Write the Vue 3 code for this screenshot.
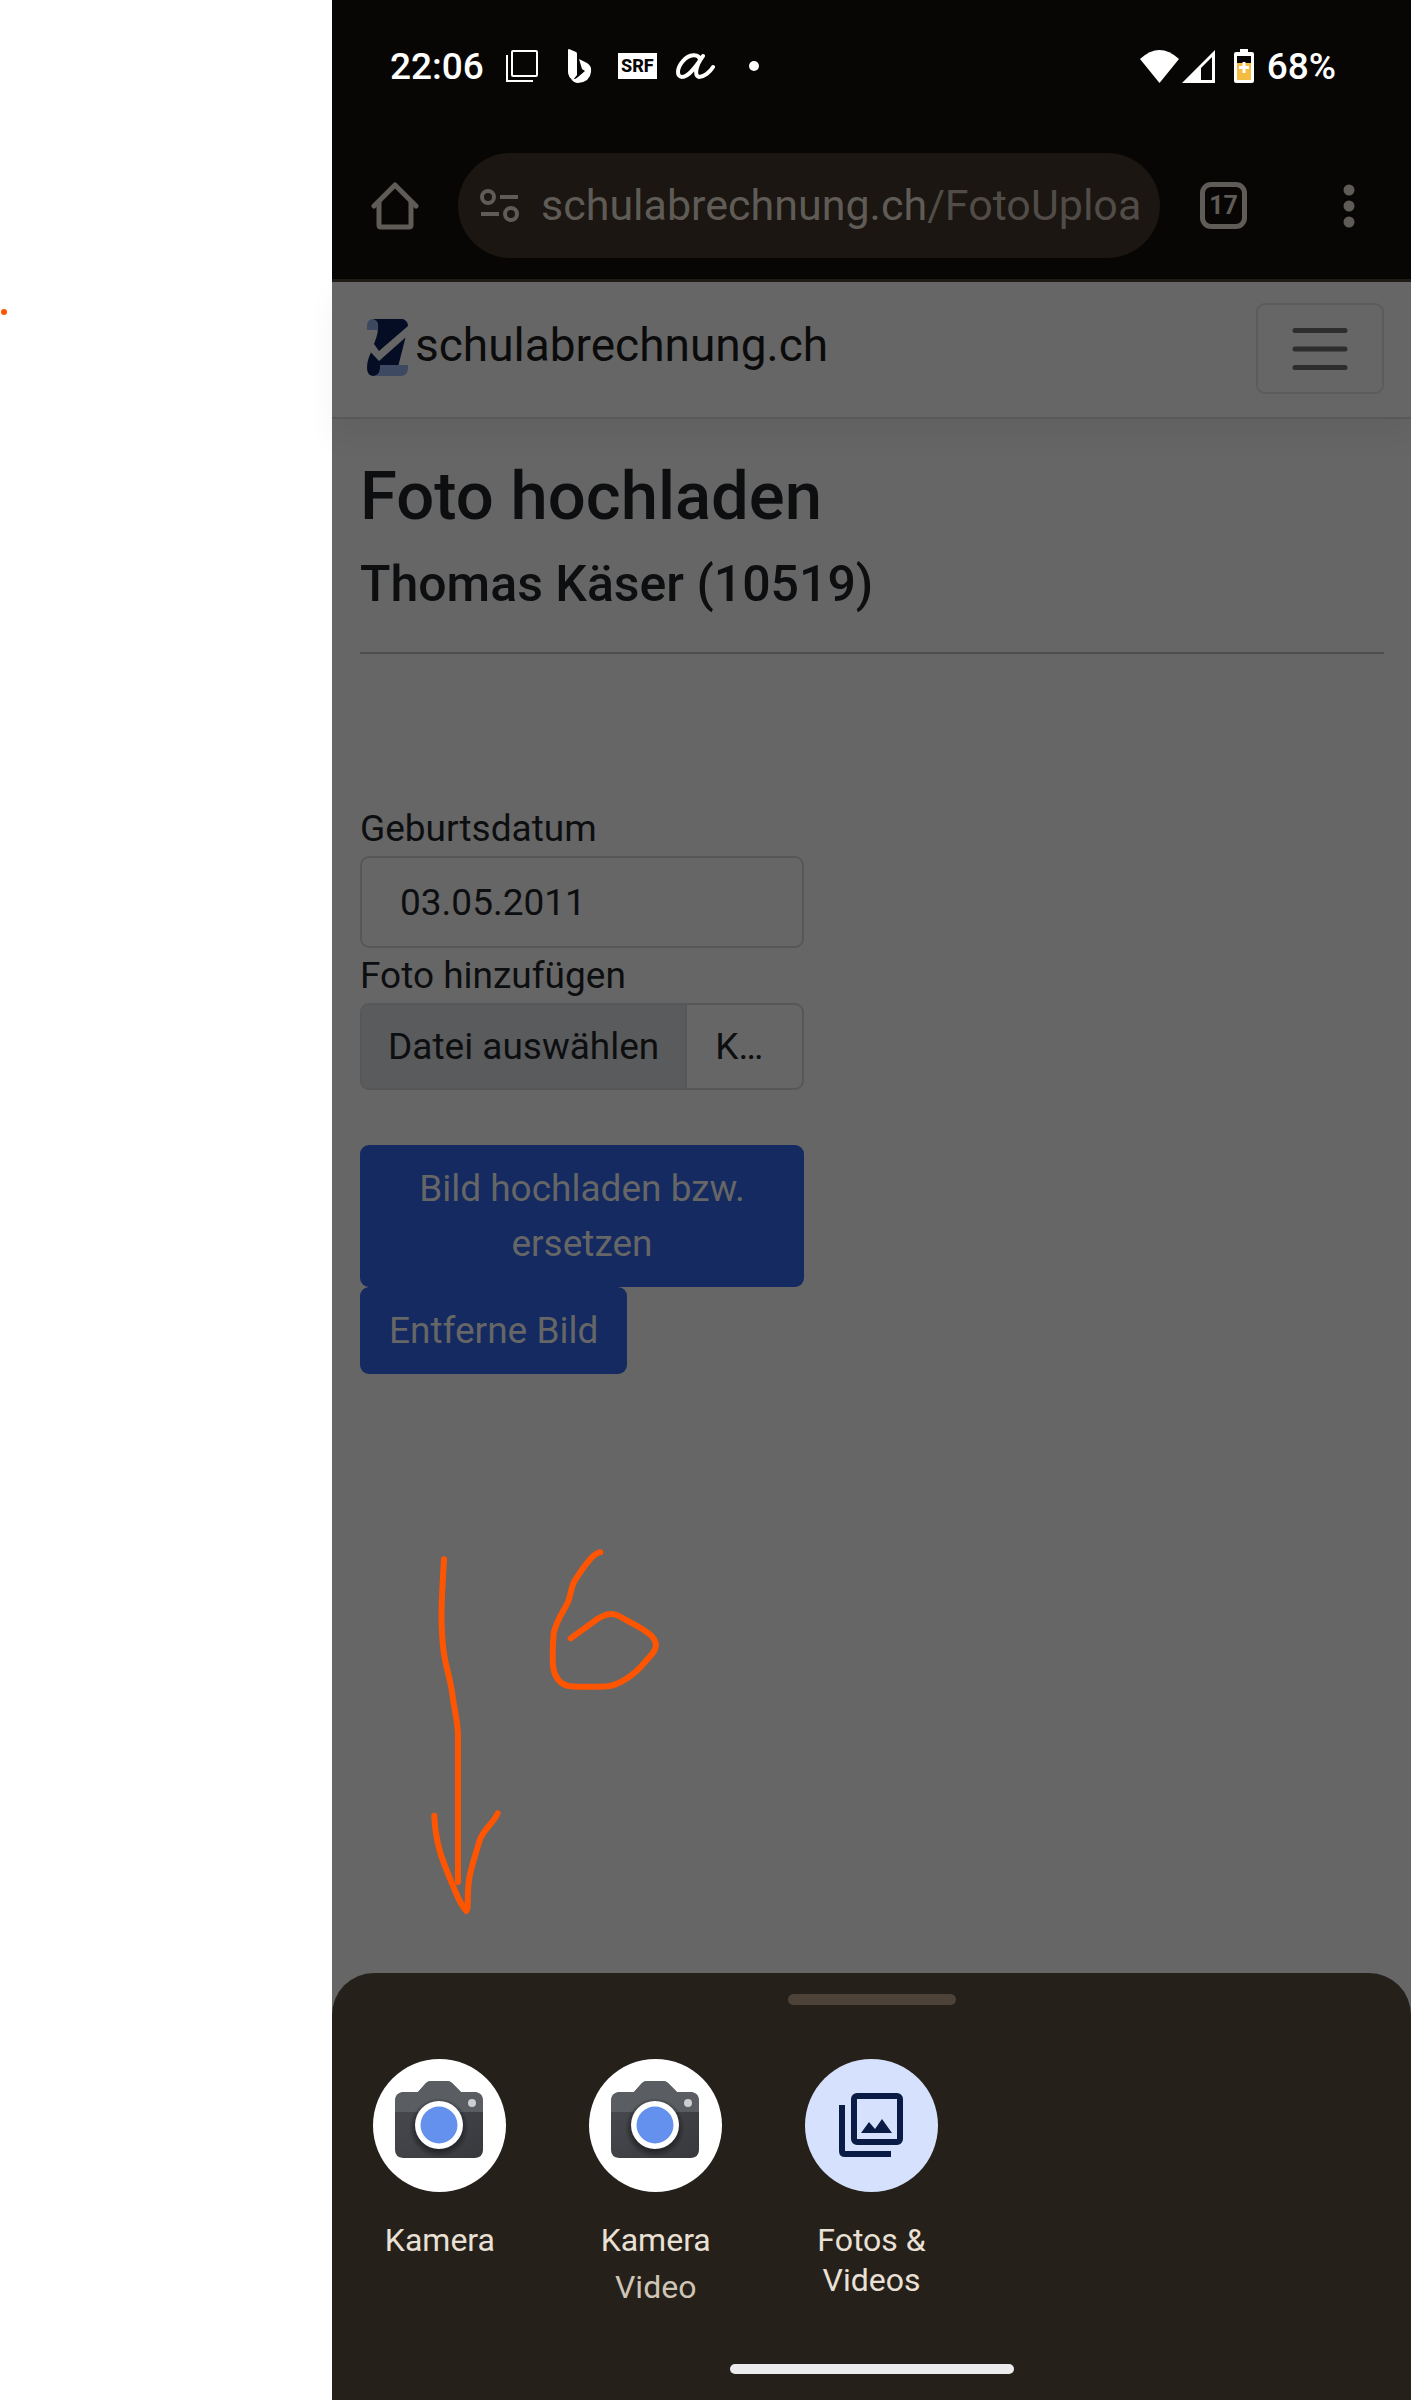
<script setup>
import { ref } from 'vue'

const birthDate = ref('03.05.2011')

const targets = [
  { id: 'photo', icon: 'camera', label: 'Kamera', sub: '' },
  { id: 'video', icon: 'camera', label: 'Kamera', sub: 'Video' },
  { id: 'gallery', icon: 'gallery', label: 'Fotos & Videos', sub: '' }
]
</script>

<template>
  <div class="page">
    <aside class="margin">
      <svg class="ink-dot" viewBox="0 0 8 8" aria-hidden="true"><circle cx="4" cy="4" r="3" fill="#ff5500" /></svg>
    </aside>

    <div class="phone">
      <header class="system">
        <div class="status">
          <span class="clock">22:06</span>
          <svg class="s-copy" viewBox="0 0 32 32" fill="none" stroke="#fff" stroke-width="2">
            <rect x="6" y="1" width="25" height="25" rx="1" />
            <path d="M1 5V31H27" />
          </svg>
          <svg class="s-bing" viewBox="0 0 24 34" fill="#fff">
            <path d="M1 0L8 3Q9 3.500 9 5V26L5 31Q0 28 0 23V1Q0 0 1 0Z" />
            <path d="M11 10L19 14Q24 17 23 23Q22 33 10 34Q6 34 3 30Q7 31 10 28L17 22L14 20Z" />
          </svg>
          <span class="s-srf">SRF</span>
          <svg class="s-script" viewBox="0 0 39 26" fill="none" stroke="#fff" stroke-width="4" stroke-linecap="round" stroke-linejoin="round">
            <path d="M24 7C23 0 13 1 7 8C0 16 1 24 6 24C13 24 21 12 27 3C20 12 18 23 23 24C28 24 34 19 37 14" />
          </svg>
          <i class="s-dot"></i>
          <span class="grow"></span>
          <svg class="s-wifi" viewBox="0 0 39 33" fill="#fff"><path d="M0 9Q19.500 -9 39 9L19.500 33Z" /></svg>
          <svg class="s-signal" viewBox="0 0 33 33">
            <path d="M0 33L33 0V33Z" fill="#fff" /><path d="M19 18L30 7V30H19Z" fill="#080604" />
          </svg>
          <svg class="s-battery" viewBox="0 0 20 34">
            <path d="M6 0H14V3H18Q20 3 20 5V32Q20 34 18 34H2Q0 34 0 32V5Q0 3 2 3H6Z" fill="#fff" />
            <path d="M3 7H17V14H3Z" fill="#080604" /><path d="M3 14H17V31H3Z" fill="#f4bd42" />
            <path d="M8.500 13H11.500V17H15V20H11.500V24H8.500V20H5V17H8.500Z" fill="#fff" />
          </svg>
          <span class="percent">68%</span>
        </div>

        <div class="toolbar">
          <button class="icon-btn home" type="button" aria-label="Startseite">
            <svg viewBox="0 0 48 48" fill="none" stroke="#5f5b56" stroke-width="5" stroke-linecap="round" stroke-linejoin="round">
              <path d="M3 24L24 3L45 24" /><path d="M8 20V43Q8 45 10 45H38Q40 45 40 43V20" />
            </svg>
          </button>
          <div class="omnibox">
            <svg class="tune" viewBox="0 0 39 34" fill="none" stroke="#5f5b56" stroke-width="4">
              <circle cx="8" cy="8" r="6" /><path d="M20 8H38M1 25H19" /><circle cx="31" cy="25" r="6" />
            </svg>
            <div class="url" role="textbox" aria-label="Adresse">schulabrechnung.ch<span>/FotoUploa</span></div>
          </div>
          <button class="tabs" type="button" aria-label="Tabs">17</button>
          <button class="icon-btn more" type="button" aria-label="Menü">
            <svg viewBox="0 0 12 44" fill="#5f5b56"><circle cx="6" cy="6" r="5.500" /><circle cx="6" cy="22" r="5.500" /><circle cx="6" cy="38" r="5.500" /></svg>
          </button>
        </div>
      </header>

      <nav class="navbar">
        <a class="brand" href="#">
          <svg class="logo" viewBox="0 1 42 69">
            <path d="M1 20V15Q2 9 7 9Q13 10 12 20Z" fill="#3c4960" />
            <path d="M7 9H37Q42 11 42 16L13 41L8 34Q13 22 12 14Q11 10 7 9Z" fill="#040d24" />
            <path d="M12 55H42V59Q41 66 35 66H7Z" fill="#3c4960" />
            <path d="M39.500 27.500L32.500 55H14Q15 65 7 66Q1 65 1 58Q1 50 5 42.500L13 51Z" fill="#040d24" />
          </svg>
          <span>schulabrechnung.ch</span>
        </a>
        <button class="toggler" type="button" aria-label="Navigation umschalten">
          <svg viewBox="0 0 56 42" stroke="#2d2d2d" stroke-width="5" stroke-linecap="round"><path d="M3 2.500H53M3 21H53M3 39.500H53" /></svg>
        </button>
      </nav>

      <main class="content">
        <h1>Foto hochladen</h1>
        <h2>Thomas Käser (10519)</h2>
        <hr />

        <form class="form" @submit.prevent>
          <label for="birth">Geburtsdatum</label>
          <input id="birth" v-model="birthDate" class="text-input" type="text" />
          <label for="photo">Foto hinzufügen</label>
          <div class="file">
            <span class="file-btn">Datei auswählen</span>
            <span class="file-name">K…</span>
            <input id="photo" type="file" accept="image/*" />
          </div>
          <button class="btn wide" type="submit">Bild hochladen bzw. ersetzen</button>
          <button class="btn" type="button">Entferne Bild</button>
        </form>

        <svg class="ink" viewBox="0 0 900 1260" fill="none" stroke="#ff5500" stroke-width="18" stroke-linecap="round" stroke-linejoin="round" aria-hidden="true">
          <path d="M132 118C125 235 120 310 131 395C137 440 148 465 156 515C163 575 174 600 174 650V1086" />
          <path d="M103 887C104 930 110 958 119 992C134 1042 160 1100 176 1137C184 1152 190 1163 199 1173C207 1167 200 1130 207 1080C212 1045 225 1010 239 961C248 930 280 910 293 880" />
          <path d="M601 97C580 97 545 150 524 182C512 203 514 220 504 246C490 275 468 302 461 340C458 380 457 420 460 445C464 470 480 497 513 499C540 502 590 500 622 499C660 495 708 460 734 427C750 408 768 395 768 375C766 350 740 335 715 320C690 307 675 298 657 288C637 276 612 284 592 297L512 355" />
        </svg>
      </main>

      <section class="sheet">
        <div class="handle"></div>
        <div class="targets">
          <button v-for="t in targets" :key="t.id" class="target" type="button">
            <svg v-if="t.icon === 'camera'" viewBox="0 0 133 133">
              <defs>
                <linearGradient :id="'body-' + t.id" x1="0" y1="0" x2="1" y2="1">
                  <stop offset="0" stop-color="#4b4c51" /><stop offset="1" stop-color="#38393d" />
                </linearGradient>
                <radialGradient :id="'shade-' + t.id">
                  <stop offset="0.750" stop-color="#1c1d20" stop-opacity="0.700" /><stop offset="1" stop-color="#1c1d20" stop-opacity="0" />
                </radialGradient>
              </defs>
              <circle cx="66.500" cy="66.500" r="66.500" fill="#fff" />
              <path d="M30 33H45L53 24Q55 22 58 22H74Q77 22 79 24L88 33H102Q110 34 110 42V91Q110 98 102 99H30Q22 98 22 91V42Q22 34 30 33Z" :fill="`url(#body-${t.id})`" />
              <path d="M30 33H45L53 24Q55 22 58 22H74Q77 22 79 24L88 33H102Q110 34 110 42V53H22V42Q22 34 30 33Z" fill="#5a5d62" />
              <circle cx="66" cy="69" r="30" :fill="`url(#shade-${t.id})`" />
              <circle cx="66" cy="66" r="24" fill="#fff" />
              <circle cx="66" cy="66" r="18.500" fill="#6491ee" />
              <circle cx="99" cy="44" r="4" fill="#cfcfd1" />
            </svg>
            <svg v-else viewBox="0 0 133 133">
              <circle cx="66.500" cy="66.500" r="66.500" fill="#d6e2fd" />
              <g fill="none" stroke="#0a1b45" stroke-width="6">
                <rect x="49" y="37" width="46" height="46" rx="3" />
                <path d="M37 46V92Q37 95 40 95H86" />
              </g>
              <path d="M56 74L64 63L70 70L77 60L87 74Z" fill="#0a1b45" />
            </svg>
            <span class="name">{{ t.label }}</span>
            <span v-if="t.sub" class="sub">{{ t.sub }}</span>
          </button>
        </div>
        <div class="home-bar"></div>
      </section>
    </div>
  </div>
</template>

<style>
body {
  margin: 0;
  background: #fff;
}
</style>

<style scoped>
* {
  box-sizing: border-box;
}
svg {
  display: block;
  flex: none;
}
button {
  font: inherit;
  border: 0;
  padding: 0;
  background: none;
  cursor: pointer;
}
.page {
  display: flex;
  min-height: 100vh;
  font-family: Roboto, "Liberation Sans", sans-serif;
}
.margin {
  position: relative;
  flex: 0 0 332px;
}
.ink-dot {
  position: absolute;
  left: 0;
  top: 308px;
  width: 8px;
  height: 8px;
}
.phone {
  flex: 1;
  min-width: 0;
  display: flex;
  flex-direction: column;
  background: #666;
}

/* system bars */
.system {
  background: #080604;
  border-bottom: 3px solid #1f1c16;
}
.status {
  display: flex;
  align-items: center;
  height: 132px;
  padding: 0 75px 0 58px;
  color: #fff;
  font-size: 37px;
  font-weight: 500;
}
.clock {
  margin-right: 22px;
}
.s-copy {
  width: 32px;
  height: 32px;
  margin-right: 30px;
}
.s-bing {
  width: 24px;
  height: 34px;
  margin-right: 26px;
}
.s-srf {
  width: 39px;
  height: 26px;
  margin-right: 19px;
  background: #fff;
  color: #080604;
  font-size: 18px;
  font-weight: 800;
  line-height: 26px;
  text-align: center;
}
.s-script {
  width: 39px;
  height: 26px;
}
.s-dot {
  width: 10px;
  height: 10px;
  margin-left: 34px;
  border-radius: 50%;
  background: #fff;
}
.grow {
  flex: 1;
}
.s-wifi {
  width: 39px;
  height: 33px;
  margin-right: 3px;
}
.s-signal {
  width: 33px;
  height: 33px;
  margin-right: 19px;
}
.s-battery {
  width: 20px;
  height: 34px;
  margin-right: 13px;
}
.toolbar {
  display: flex;
  align-items: center;
  padding: 21px 56px 21px 39px;
}
.home svg {
  width: 48px;
  height: 48px;
}
.omnibox {
  flex: 1;
  min-width: 0;
  display: flex;
  align-items: center;
  height: 105px;
  margin: 0 40px 0 39px;
  padding: 0 21px 0 22px;
  border-radius: 53px;
  background: #1b1611;
}
.tune {
  width: 39px;
  height: 34px;
  margin-right: 22px;
}
.url {
  flex: 1;
  min-width: 0;
  overflow: hidden;
  white-space: nowrap;
  font-size: 43px;
  line-height: 50px;
  padding-bottom: 2px;
  color: #5f5b56;
}
.url span {
  color: #514c47;
}
.tabs {
  width: 47px;
  height: 47px;
  margin-right: 96px;
  border: 5px solid #5f5b56;
  border-radius: 11px;
  color: #5f5b56;
  font-size: 25px;
  font-weight: 700;
  line-height: 37px;
}
.more svg {
  width: 12px;
  height: 44px;
}

/* site */
.navbar {
  display: flex;
  align-items: center;
  justify-content: space-between;
  padding: 21px 27px 23px 34px;
  border-bottom: 2px solid #585858;
  box-shadow: 0 18px 27px rgba(0, 0, 0, 0.05);
}
.brand {
  display: flex;
  gap: 7px;
  padding-bottom: 6px;
  color: #0b0b0b;
  font-size: 46px;
  line-height: 69px;
  text-decoration: none;
}
.logo {
  width: 42px;
  height: 69px;
}
.toggler {
  display: flex;
  align-items: center;
  justify-content: center;
  width: 128px;
  height: 91px;
  border: 2px solid #5c5c5c;
  border-radius: 9px;
}
.toggler svg {
  width: 56px;
  height: 42px;
}
.content {
  position: relative;
  flex: 1;
  padding: 37px 27px 0 28px;
  color: #0d0e10;
}
h1,
h2 {
  margin: 0;
  font-weight: 500;
}
h1 {
  font-size: 67px;
  line-height: 80px;
}
h2 {
  margin-top: 18px;
  font-size: 50px;
  line-height: 60px;
}
hr {
  height: 2px;
  margin: 38px 0 147px;
  border: 0;
  background: #4e4e4f;
}
.form {
  display: flex;
  flex-direction: column;
  align-items: flex-start;
  width: 444px;
  font-size: 37px;
  line-height: 55px;
}
.text-input {
  width: 100%;
  height: 92px;
  padding: 0 38px;
  border: 2px solid #565758;
  border-radius: 9px;
  background: #666;
  color: inherit;
  font: inherit;
}
.file {
  position: relative;
  display: flex;
  width: 100%;
  height: 87px;
  margin-bottom: 55px;
  border: 2px solid #565758;
  border-radius: 9px;
  overflow: hidden;
  line-height: 83px;
  white-space: nowrap;
}
.file input {
  position: absolute;
  inset: 0;
  width: 100%;
  opacity: 0;
}
.file-btn {
  padding: 0 26px;
  border-right: 2px solid #565758;
  background: #5a5b5d;
}
.file-name {
  padding: 0 28px;
}
.btn {
  padding: 16px 29px;
  border-radius: 9px;
  background: #142a60;
  color: #666;
}
.wide {
  width: 100%;
}
.ink {
  position: absolute;
  left: 68px;
  top: 1101px;
  width: 300px;
  height: 420px;
}

/* chooser */
.sheet {
  display: flex;
  flex-direction: column;
  align-items: center;
  padding: 21px 0 26px;
  border-radius: 42px 42px 0 0;
  background: #25201a;
}
.handle {
  width: 168px;
  height: 11px;
  border-radius: 6px;
  background: #4d4338;
}
.targets {
  display: grid;
  grid-template-columns: repeat(5, 1fr);
  width: 100%;
  margin: 54px 0 57px;
}
.target {
  display: flex;
  flex-direction: column;
  align-items: center;
  color: #eae0d5;
  font-size: 32px;
  line-height: 40px;
}
.target svg {
  width: 133px;
  height: 133px;
}
.name {
  max-width: 140px;
  margin-top: 28px;
}
.sub {
  margin-top: 7px;
  color: #cfc4b5;
}
.home-bar {
  width: 284px;
  height: 10px;
  border-radius: 5px;
  background: #ececec;
}
</style>
